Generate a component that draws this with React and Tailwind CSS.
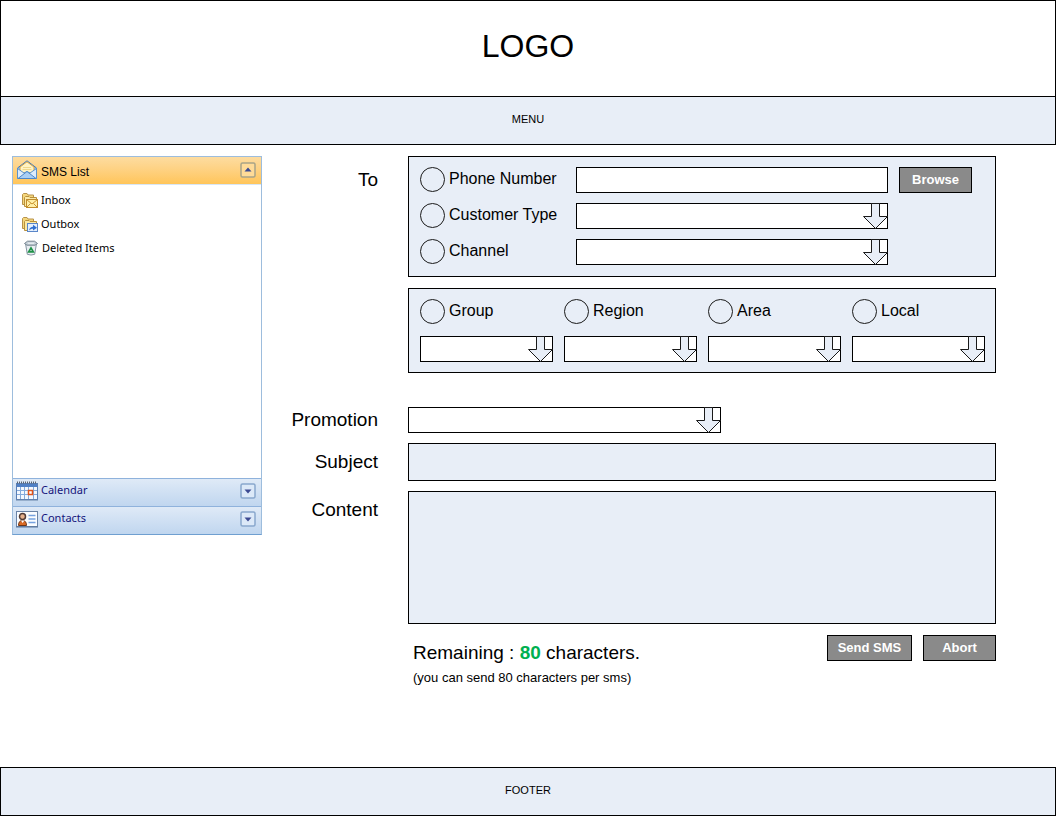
import React from "react";

function DownArrow() {
  return (
    <svg
      className="pointer-events-none absolute top-0 right-0 h-[26px] w-[26px]"
      viewBox="0 0 26 26"
      aria-hidden="true"
    >
      <path
        d="M9.5 0.5H17.5V13.5H25.5L13.5 25.5L1.5 13.5H9.5Z"
        fill="#e8eef7"
        stroke="#1a1a1a"
      />
    </svg>
  );
}

function SelectBox({ label, id }) {
  return (
    <div className="relative h-[26px] w-full">
      <select
        id={id}
        aria-label={label}
        className="block h-full w-full appearance-none rounded-none border border-black bg-white px-2 text-sm"
      >
        <option value=""></option>
      </select>
      <DownArrow />
    </div>
  );
}

function Radio({ label }) {
  return (
    <label className="flex h-[26px] items-start gap-1 whitespace-nowrap text-base leading-6">
      <input
        type="radio"
        name="recipient"
        className="h-[25px] w-[25px] shrink-0 appearance-none rounded-full border border-[#1a1a1a] checked:bg-[#8a8a8a]"
      />
      <span>{label}</span>
    </label>
  );
}

function PushButton({ children, className, type = "button" }) {
  return (
    <button
      type={type}
      className={`h-[26px] border border-black bg-[#8a8a8a] text-[13px] leading-5 font-bold text-white ${className}`}
    >
      {children}
    </button>
  );
}

function EnvelopeIcon() {
  return (
    <svg className="h-5 w-5 shrink-0" viewBox="0 0 20 20" aria-hidden="true">
      <path d="M0.500 8L10 0.800L19.500 8V18.500H0.500Z" fill="#8fbcee" stroke="#3f79bd" />
      <path d="M3 7L10 1.800L17 7V13H3Z" fill="#fff3c4" stroke="#e0a436" />
      <path d="M6 7.500H14M5.500 9.500H14.500" stroke="#f0d88c" />
      <path d="M0.500 8.500L7 13L10 11.500L13 13L19.500 8.500V18.500H0.500Z" fill="#dcecfb" stroke="#5b92cd" />
      <path d="M1 18.500L10 11.500L19 18.500Z" fill="#a9cff5" stroke="#4d88ca" />
    </svg>
  );
}

function MailFolderIcon({ outgoing }) {
  return (
    <svg className="h-4 w-4 shrink-0" viewBox="0 0 16 16" aria-hidden="true">
      <path d="M0.500 2.500L1.500 1.500H5L6 3H11.500V12.500H0.500Z" fill="#f4d67c" stroke="#b8934a" />
      <path d="M2.500 5.500L3.500 4.500H7L8 5.500H14.500V14.500H2.500Z" fill="#fbe9a5" stroke="#b9913c" />
      {outgoing ? (
        <>
          <rect x="5.500" y="7.500" width="10" height="8" fill="#e4effc" stroke="#5a86c9" />
          <path d="M7 14.500C7.500 12 9 10.800 11 10.800V8.800L15 11.700L11 14.600V12.800C9.500 12.800 8 13.300 7 14.500Z" fill="#2f6fd0" />
        </>
      ) : (
        <>
          <rect x="4.500" y="7.500" width="11" height="8" fill="#fff0a8" stroke="#c18c2c" />
          <path d="M4.500 7.500L10 12L15.500 7.500M4.500 15.500L8.500 11.500M15.500 15.500L11.500 11.500" fill="none" stroke="#c9922f" />
        </>
      )}
    </svg>
  );
}

function RecycleBinIcon() {
  return (
    <svg className="h-4 w-4 shrink-0" viewBox="0 0 16 16" aria-hidden="true">
      <path d="M2.500 3.500L4.300 14.300Q8 15.800 11.700 14.300L13.500 3.500Z" fill="#e9eef2" stroke="#8695a3" />
      <path d="M1.500 3.500L4.500 1.200H11.500L14.500 3.500L12 5.200H4Z" fill="#c7d1d9" stroke="#74838f" />
      <path d="M5 3.200H11" stroke="#f3f6f8" />
      <path d="M8 8L10.300 11.800H5.700Z" fill="none" stroke="#1f9148" strokeWidth="1.700" />
    </svg>
  );
}

function CalendarIcon() {
  return (
    <svg className="h-5 w-[22px] shrink-0" viewBox="0 0 22 20" aria-hidden="true">
      <rect x="0.500" y="2.500" width="21" height="16" fill="#f3f8ff" stroke="#5a7fb5" />
      <path d="M1 4.500H21" stroke="#4f80c6" strokeWidth="3" />
      <path d="M1 1.500H21" stroke="#5b6470" strokeWidth="2" strokeDasharray="1 1" />
      <path d="M1 9.500H21M1 13.500H21M4.500 6V18M8.500 6V18M12.500 6V18M17.500 6V18" stroke="#84aadb" />
      <rect x="12.500" y="9.500" width="4" height="4" fill="#fff" stroke="#e0541c" strokeWidth="1.500" />
      <path d="M0 19H22" stroke="#6884a8" />
    </svg>
  );
}

function ContactsIcon() {
  return (
    <svg className="h-5 w-[22px] shrink-0" viewBox="0 0 22 20" aria-hidden="true">
      <rect x="0.500" y="2.500" width="21" height="15" fill="#fbfdff" stroke="#6a83a6" />
      <path d="M0 18H22" stroke="#59749a" />
      <path d="M2.500 16.500Q2.500 11.500 6.500 11.500T10.500 16.500Z" fill="#d96a24" stroke="#713616" />
      <circle cx="6.500" cy="7.500" r="3" fill="#e5b18d" stroke="#513b35" strokeWidth="1.500" />
      <path d="M5 11.500L6.500 14L8.500 11.500" fill="#fff" />
      <path d="M12.500 6.500H19.500M12.500 10H19.500M12.500 13.500H19.500" stroke="#76a2df" strokeWidth="1.500" />
    </svg>
  );
}

function Toggle({ up }) {
  return (
    <svg className="ml-auto h-4 w-4 shrink-0" viewBox="0 0 16 16" aria-hidden="true">
      <rect
        x="1"
        y="1"
        width="14"
        height="14"
        rx="1.500"
        fill={up ? "#ffdb98" : "#dce9f8"}
        stroke={up ? "#a9a488" : "#89a8cd"}
        strokeWidth="1.500"
      />
      {up ? (
        <path d="M4.500 9.500L8 5.500L11.500 9.500Z" fill="#3c4a92" />
      ) : (
        <path d="M4.500 6.500H11.500L8 10.500Z" fill="#3c4a92" />
      )}
    </svg>
  );
}

function CollapsedSection({ icon, children }) {
  return (
    <button
      type="button"
      aria-expanded="false"
      className="flex h-7 w-full items-center gap-[3px] border-t border-[#8fb2dc] bg-linear-to-b from-[#dfeaf7] to-[#c0d6ef] pr-[5px] pb-1 pl-[3px] text-[#15157c]"
    >
      {icon}
      <span>{children}</span>
      <Toggle />
    </button>
  );
}

function Sidebar() {
  return (
    <aside className="w-[250px] shrink-0 border border-[#9dbddd] border-b-[#6f9fd0] font-['Noto_Sans','Open_Sans',sans-serif] text-[11px]">
      <button
        type="button"
        aria-expanded="true"
        className="flex h-7 w-full items-center gap-1 border-b border-[#d8e6f5] bg-linear-to-b from-[#fddca0] to-[#ffc559] pr-[5px] pb-[2px] pl-1 font-['Liberation_Sans',Arial,sans-serif] text-xs"
      >
        <EnvelopeIcon />
        <span className="pt-1">SMS List</span>
        <Toggle up />
      </button>
      <ul className="flex h-[293px] flex-col gap-2 bg-white pt-[7px] pl-[9px] leading-4">
        <li>
          <a href="#inbox" className="flex items-center gap-[3px]">
            <MailFolderIcon />
            Inbox
          </a>
        </li>
        <li>
          <a href="#outbox" className="flex items-center gap-[3px]">
            <MailFolderIcon outgoing />
            Outbox
          </a>
        </li>
        <li>
          <a href="#deleted" className="flex items-center gap-[3px] pl-px">
            <RecycleBinIcon />
            Deleted Items
          </a>
        </li>
      </ul>
      <CollapsedSection icon={<CalendarIcon />}>Calendar</CollapsedSection>
      <CollapsedSection icon={<ContactsIcon />}>Contacts</CollapsedSection>
    </aside>
  );
}

function Row({ label, htmlFor, className = "", labelClass, children }) {
  const Tag = htmlFor ? "label" : "span";
  return (
    <div className={`grid grid-cols-[116px_1fr] gap-x-[30px] ${className}`}>
      <Tag
        htmlFor={htmlFor}
        className={`flex items-center justify-end text-[19px] leading-6 ${labelClass}`}
      >
        {label}
      </Tag>
      {children}
    </div>
  );
}

function SmsForm() {
  return (
    <form className="min-w-0 flex-1" onSubmit={(e) => e.preventDefault()}>
      <Row label="To" labelClass="h-12">
        <div className="flex flex-col gap-[11px]">
          <div className="grid grid-cols-[145px_1fr_73px] gap-x-[11px] gap-y-[10px] border border-black bg-[#e8eef7] pt-[10px] pr-[23px] pb-[11px] pl-[11px]">
            <Radio label="Phone Number" />
            <input
              type="text"
              aria-label="Phone Number value"
              className="h-[26px] w-full min-w-0 rounded-none border border-black bg-white px-2 text-sm"
            />
            <PushButton className="w-full">Browse</PushButton>
            <Radio label="Customer Type" />
            <SelectBox label="Customer Type value" />
            <span />
            <Radio label="Channel" />
            <SelectBox label="Channel value" />
          </div>
          <div className="grid grid-cols-4 gap-[11px] border border-black bg-[#e8eef7] py-[10px] pr-[10px] pl-[11px]">
            {["Group", "Region", "Area", "Local"].map((name) => (
              <div key={name} className="flex flex-col gap-[11px]">
                <Radio label={name} />
                <SelectBox label={`${name} value`} />
              </div>
            ))}
          </div>
        </div>
      </Row>
      <Row label="Promotion" htmlFor="promotion" className="mt-[34px]" labelClass="h-[26px]">
        <div className="w-full max-w-[313px]">
          <SelectBox id="promotion" label="Promotion" />
        </div>
      </Row>
      <Row label="Subject" htmlFor="subject" className="mt-[10px]" labelClass="h-[38px]">
        <input
          id="subject"
          type="text"
          className="h-[38px] w-full min-w-0 rounded-none border border-black bg-[#e8eef7] px-2"
        />
      </Row>
      <Row label="Content" htmlFor="content" className="mt-[10px]" labelClass="h-[38px]">
        <textarea
          id="content"
          className="block h-[133px] w-full resize-none rounded-none border border-black bg-[#e8eef7] p-2"
        />
      </Row>
      <div className="mt-[11px] flex items-start justify-between pl-[151px]">
        <div className="flex flex-col gap-1 pt-[6px]">
          <p className="text-[19px] leading-6">
            Remaining : <strong className="font-bold text-[#00b050]">80</strong> characters.
          </p>
          <p className="text-[13px] leading-[18px]">(you can send 80 characters per sms)</p>
        </div>
        <div className="flex gap-[11px]">
          <PushButton type="submit" className="w-[85px]">
            Send SMS
          </PushButton>
          <PushButton className="w-[73px]">Abort</PushButton>
        </div>
      </div>
    </form>
  );
}

export default function App() {
  return (
    <div className="flex min-h-screen flex-col bg-white font-['Liberation_Sans',Arial,sans-serif] text-black">
      <header className="flex h-[97px] items-center justify-center border border-black pb-[5px]">
        <h1 className="text-[32px] leading-10">LOGO</h1>
      </header>
      <nav className="flex h-12 items-center justify-center border border-t-0 border-black bg-[#e8eef7] pb-[2px] text-[11px]">
        MENU
      </nav>
      <main className="flex items-start pt-[11px] pr-[60px] pb-8 pl-3">
        <Sidebar />
        <SmsForm />
      </main>
      <footer className="mt-auto flex h-[49px] items-center justify-center border border-black bg-[#e8eef7] pb-[2px] text-[11px]">
        FOOTER
      </footer>
    </div>
  );
}
